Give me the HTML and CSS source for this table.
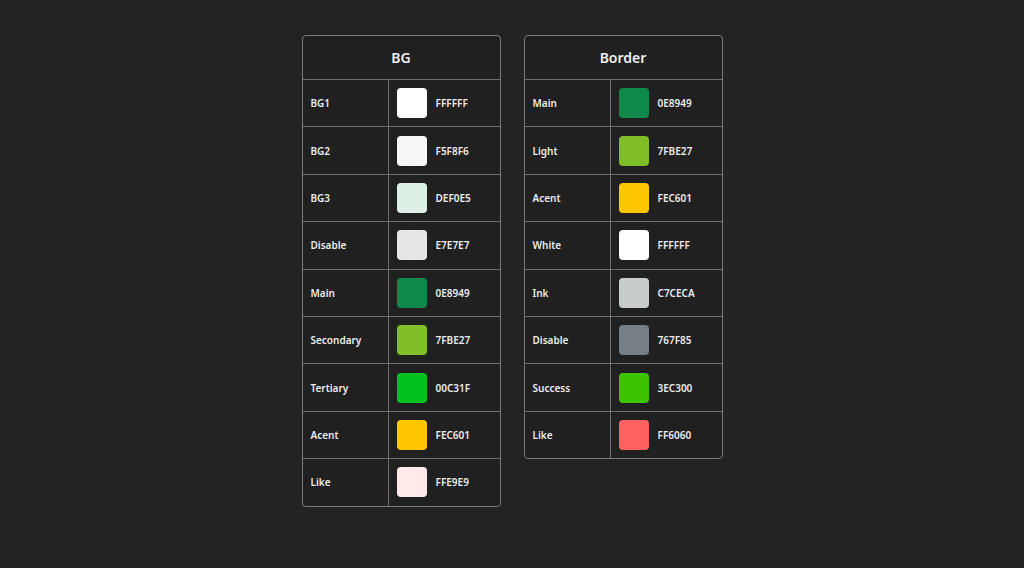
FILE: index.html
```html
<!DOCTYPE html>
<html>
<head>
<meta charset="utf-8">
<link rel="stylesheet" href="styles.css">
</head>
<body>
<div class="page">
  <div class="card">
    <div class="head">BG</div>
    <div class="row"><div class="name">BG1</div><div class="val"><span class="sw" style="background:#FFFFFF"></span>FFFFFF</div></div>
    <div class="row"><div class="name">BG2</div><div class="val"><span class="sw" style="background:#F5F8F6"></span>F5F8F6</div></div>
    <div class="row"><div class="name">BG3</div><div class="val"><span class="sw" style="background:#DEF0E5"></span>DEF0E5</div></div>
    <div class="row"><div class="name">Disable</div><div class="val"><span class="sw" style="background:#E7E7E7"></span>E7E7E7</div></div>
    <div class="row"><div class="name">Main</div><div class="val"><span class="sw" style="background:#0E8949"></span>0E8949</div></div>
    <div class="row"><div class="name">Secondary</div><div class="val"><span class="sw" style="background:#7FBE27"></span>7FBE27</div></div>
    <div class="row"><div class="name">Tertiary</div><div class="val"><span class="sw" style="background:#00C31F"></span>00C31F</div></div>
    <div class="row"><div class="name">Acent</div><div class="val"><span class="sw" style="background:#FEC601"></span>FEC601</div></div>
    <div class="row"><div class="name">Like</div><div class="val"><span class="sw" style="background:#FFE9E9"></span>FFE9E9</div></div>
  </div>
  <div class="card">
    <div class="head">Border</div>
    <div class="row"><div class="name">Main</div><div class="val"><span class="sw" style="background:#0E8949"></span>0E8949</div></div>
    <div class="row"><div class="name">Light</div><div class="val"><span class="sw" style="background:#7FBE27"></span>7FBE27</div></div>
    <div class="row"><div class="name">Acent</div><div class="val"><span class="sw" style="background:#FEC601"></span>FEC601</div></div>
    <div class="row"><div class="name">White</div><div class="val"><span class="sw" style="background:#FFFFFF"></span>FFFFFF</div></div>
    <div class="row"><div class="name">Ink</div><div class="val"><span class="sw" style="background:#C7CECA"></span>C7CECA</div></div>
    <div class="row"><div class="name">Disable</div><div class="val"><span class="sw" style="background:#767F85"></span>767F85</div></div>
    <div class="row"><div class="name">Success</div><div class="val"><span class="sw" style="background:#3EC300"></span>3EC300</div></div>
    <div class="row"><div class="name">Like</div><div class="val"><span class="sw" style="background:#FF6060"></span>FF6060</div></div>
  </div>
</div>
</body>
</html>
```

FILE: styles.css
```css
html, body {
  margin: 0;
  padding: 0;
  background: #232323;
}
body {
  width: 1024px;
  height: 568px;
  overflow: hidden;
  font-family: "Noto Sans", "Open Sans", sans-serif;
  color: #ececec;
}
.page {
  display: flex;
  justify-content: center;
  align-items: flex-start;
  gap: 23px;
  padding-top: 35px;
}
.card {
  width: 197px;
  border: 1px solid #7a7a7a;
  border-radius: 4px;
  background: #202020;
}
.head {
  height: 43px;
  display: flex;
  align-items: center;
  justify-content: center;
  font-size: 14px;
  font-weight: 600;
  color: #f0f0f0;
}
.row {
  display: flex;
  height: 46.4px;
  border-top: 1px solid #6e6e6e;
}
.name {
  width: 77px;
  padding-left: 8px;
  border-right: 1px solid #6e6e6e;
  display: flex;
  align-items: center;
  font-size: 10px;
  font-weight: 600;
}
.val {
  flex: 1;
  display: flex;
  align-items: center;
  padding-left: 8px;
  gap: 9px;
  font-size: 10px;
  font-weight: 600;
}
.sw {
  width: 30px;
  height: 30px;
  border-radius: 4px;
  display: block;
}
```
